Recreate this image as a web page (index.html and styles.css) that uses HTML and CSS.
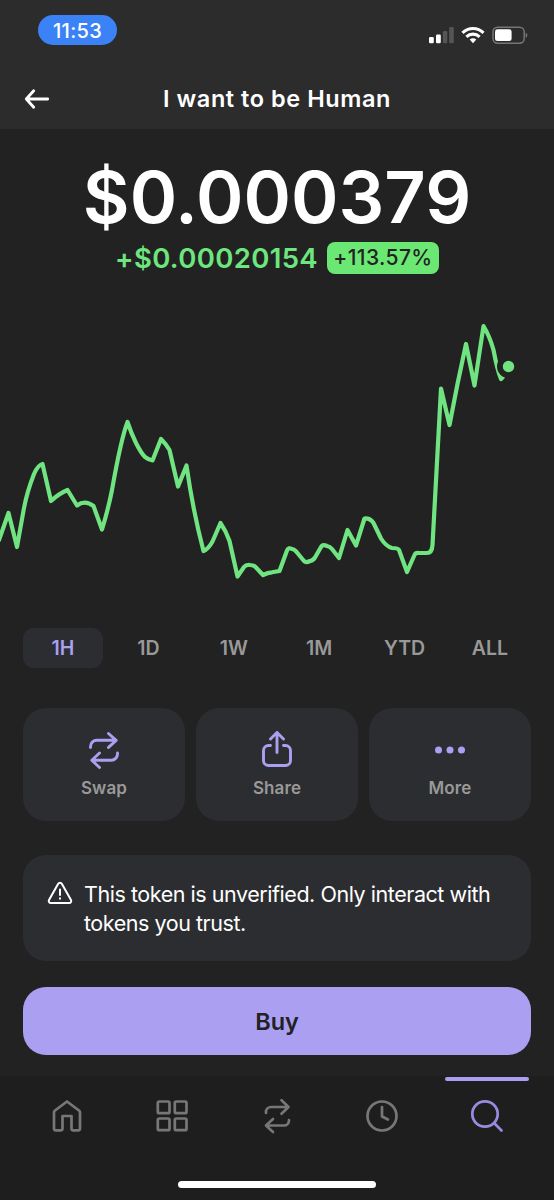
FILE: index.html
```html
<!DOCTYPE html>
<html lang="en">
<head>
<meta charset="UTF-8" />
<meta name="viewport" content="width=device-width, initial-scale=1" />
<title>I want to be Human</title>
<link rel="stylesheet" href="styles.css">
</head>
<body>
  <header class="top">
    <div class="status-bar">
      <span class="time">11:53</span>
      <svg class="status-icons" width="100" height="20" viewBox="0 0 100 20" aria-hidden="true">
        <g fill="#fff">
          <rect x="1" y="12" width="4.8" height="6.3" rx="1.3" />
          <rect x="8" y="9.5" width="4.8" height="8.8" rx="1.3" />
          <rect x="14.9" y="6" width="4.4" height="12.3" rx="1.3" fill="#555" />
          <rect x="21.2" y="2" width="4.6" height="16.3" rx="1.3" fill="#555" />
        </g>
        <g fill="none" stroke="#fff" stroke-width="3.1">
          <path d="M34.5 7.8a15 15 0 0 1 21 0" />
          <path d="M38.4 11.8a9.5 9.5 0 0 1 13.2 0" />
        </g>
        <path d="M41.7 14.6a5 5 0 0 1 6.6 0L45 18.2z" fill="#fff" />
        <rect x="65" y="2.2" width="31.2" height="16" rx="4.6" fill="none" stroke="#757575" stroke-width="1.5" />
        <rect x="67" y="4.3" width="16.6" height="11.8" rx="2.4" fill="#fff" />
        <path d="M97.7 7.7c2.2.8 2.2 4.2 0 5z" fill="#757575" />
      </svg>
    </div>
    <div class="title-bar">
      <svg class="back" width="28" height="24" viewBox="0 0 28 24" aria-label="Back">
        <path d="M11.700 3.700 4.300 12l7.400 8.300M4.300 12h21.400" />
      </svg>
      <h1>I want to be Human</h1>
    </div>
  </header>

  <main>
    <section class="price-block">
      <div class="price">$0.000379</div>
      <div class="change">
        <span class="change-value">+$0.00020154</span>
        <span class="badge">+113.57%</span>
      </div>
    </section>

    <!-- Price chart -->
    <svg class="chart" width="554" height="300" viewBox="0 300 554 300" aria-label="Price chart">
      <path class="line" d="M-1 540 L8.500 513 L17 547 L24 508 Q27 492 34 474 Q38 465 42.500 464 L51 501 Q59 493.500 67.500 490 L77 505.500 Q85 499.500 93.500 506 L102 529.500 Q108 510 112 490 Q121 439 127.500 422 Q131.500 434 136 443 Q141 453 145 457 Q149 460 152.500 460.500 L161 439 Q166 444 169.500 450 L178 486.500 L186.500 465.500 Q193 511 203.500 551 Q208 549.500 212.500 541.500 L220.500 523 Q226 531 229.500 541 L237.500 576.500 L244 567 Q246 564.500 250 565 Q254 565 256 567.500 L263 575 Q268 572.500 272 572.300 L279.500 571 L287 550.500 Q288.500 547 292 549 Q295 549.500 297 552.500 L304 561 Q306 563 310 561 Q313 560.500 315 557.500 L321 547 Q322.500 544 327 546 Q330 546.500 332 549 L339 558 L347.500 530 L356 545.500 L364.500 518.500 Q370 518 373.500 523 L381 538.500 Q386 546.500 392 548 Q398 548 399 550 L407 572 L414.500 555 Q415.500 552.500 419 553 H427 Q432 553 432.500 545 L441 388.500 L449.500 425 L457.500 384 L466 344 L474.500 385.500 L483.500 326 Q490 337 493.500 350 Q497 369 501 379 L509 370" />
      <circle class="halo" cx="508.500" cy="366.500" r="11.500" />
      <circle class="dot" cx="508.500" cy="366.500" r="5.700" />
    </svg>

    <nav class="ranges" aria-label="Chart range">
      <button class="range active">1H</button>
      <button class="range">1D</button>
      <button class="range">1W</button>
      <button class="range">1M</button>
      <button class="range">YTD</button>
      <button class="range">ALL</button>
    </nav>

    <section class="actions" aria-label="Actions">
      <button class="action">
        <svg width="40" height="40" viewBox="0 0 40 40">
          <path d="M6.500 17.500V16.500a6.200 6.200 0 0 1 6.200-6.200H32M24.500 3.500l7.700 6.900-7.700 7M33.500 23v1a6.200 6.200 0 0 1-6.200 6.200H8M15.500 23 7.800 30.200l7.700 7.300" />
        </svg>
        <span>Swap</span>
      </button>
      <button class="action">
        <svg width="40" height="40" viewBox="0 0 40 40">
          <path d="M20 22.500V2.500M13.500 9 20 2.500 26.500 9M13.500 15.500h-2a5 5 0 0 0-5 5v10a5 5 0 0 0 5 5h17a5 5 0 0 0 5-5v-10a5 5 0 0 0-5-5h-2" />
        </svg>
        <span>Share</span>
      </button>
      <button class="action">
        <svg width="40" height="40" viewBox="0 0 40 40">
          <g class="dots">
            <circle cx="8.500" cy="20" r="3.500" />
            <circle cx="20" cy="20" r="3.500" />
            <circle cx="31.500" cy="20" r="3.500" />
          </g>
        </svg>
        <span>More</span>
      </button>
    </section>

    <section class="notice">
      <svg width="28" height="26" viewBox="0 0 28 26" aria-hidden="true">
        <path d="M12.200 3.800a2.100 2.100 0 0 1 3.600 0l9.200 16.200a2.100 2.100 0 0 1-1.800 3.100H4.800A2.100 2.100 0 0 1 3 20zM14 9.500v5.500M14 18.300v.4" />
      </svg>
      <p>This token is unverified. Only interact with tokens you trust.</p>
    </section>

    <button class="buy">Buy</button>
  </main>

  <footer class="bottom">
    <nav class="tab-bar" aria-label="Main">
      <a class="tab" aria-label="Home">
        <svg width="40" height="40" viewBox="0 0 40 40">
          <path d="M20 5.500 32 14.500Q33 15.300 33 16.500V32.500Q33 34.300 31.200 34.300H26.200Q24.500 34.300 24.500 32.500V20H15.500V32.500Q15.500 34.300 13.700 34.300H8.800Q7 34.300 7 32.500V16.500Q7 15.300 8 14.500Z" />
        </svg>
      </a>
      <a class="tab" aria-label="Collectibles">
        <svg width="40" height="40" viewBox="0 0 40 40">
          <rect x="5.800" y="5.500" width="11.700" height="11.700" rx="1.500" />
          <rect x="22.800" y="5.500" width="11.700" height="11.700" rx="1.500" />
          <rect x="5.800" y="22.500" width="11.700" height="11.700" rx="1.500" />
          <rect x="22.800" y="22.500" width="11.700" height="11.700" rx="1.500" />
        </svg>
      </a>
      <a class="tab" aria-label="Swap">
        <svg width="40" height="40" viewBox="0 0 40 40">
          <path d="M9 17v-1a5 5 0 0 1 5-5H31M24.500 4.300l7 6.700-7 6.700M32 24v.500a5 5 0 0 1-5 5H9M16 23l-7 6.500 7 6.500" />
        </svg>
      </a>
      <a class="tab" aria-label="Activity">
        <svg width="40" height="40" viewBox="0 0 40 40">
          <circle cx="20" cy="20" r="14.500" />
          <path d="M20 11v9.500l6 3" />
        </svg>
      </a>
      <a class="tab active" aria-label="Search">
        <svg width="40" height="40" viewBox="0 0 40 40">
          <circle cx="18" cy="18" r="12.700" />
          <path d="M27.300 27.300 34.500 34.500" />
        </svg>
      </a>
    </nav>
    <div class="home-indicator"></div>
  </footer>
</body>
</html>
```
FILE: styles.css
```css
/* Reset and base styles */
* {
  margin: 0;
  padding: 0;
  box-sizing: border-box;
}
body {
  width: 554px;
  height: 1200px;
  display: flex;
  flex-direction: column;
  overflow: hidden;
  background: #222;
  color: #fff;
  font-family: Inter, "Liberation Sans", sans-serif;
}
button {
  border: none;
  background: none;
  font-family: inherit;
  cursor: pointer;
}
svg {
  display: block;
  flex-shrink: 0;
}

/* Header */
.top {
  height: 129px;
  background: #2c2c2c;
}
.status-bar {
  height: 68px;
  display: flex;
  justify-content: space-between;
  align-items: flex-start;
  padding: 15px 26px 0 38px;
}
.time {
  width: 79px;
  height: 30px;
  border-radius: 15px;
  background: #3c82f7;
  font-size: 20px;
  font-weight: 500;
  line-height: 32px;
  letter-spacing: 0.3px;
  text-align: center;
}
.status-icons {
  margin-top: 10px;
}
.title-bar {
  height: 61px;
  display: grid;
  grid-template-columns: 28px 1fr 28px;
  align-items: center;
  padding: 0 22px;
}
.back {
  fill: none;
  stroke: #fff;
  stroke-width: 2.8;
  stroke-linecap: round;
  stroke-linejoin: round;
}
h1 {
  font-size: 23.5px;
  font-weight: 600;
  letter-spacing: 0.55px;
  text-align: center;
}

/* Price */
main {
  flex: 1;
}
.price-block {
  height: 171px;
  padding-top: 30px;
}
.price {
  font-size: 72px;
  font-weight: 600;
  line-height: 76px;
  text-align: center;
}
.change {
  display: flex;
  justify-content: center;
  align-items: center;
  gap: 9px;
  margin-top: 7px;
}
.change-value {
  color: #6ee67f;
  font-size: 27.5px;
  font-weight: 600;
  line-height: 32px;
  letter-spacing: 0.35px;
}
.badge {
  width: 112px;
  height: 32px;
  border-radius: 8px;
  background: #6be873;
  color: #222;
  font-size: 21px;
  font-weight: 500;
  line-height: 32px;
  letter-spacing: 0.4px;
  text-align: center;
}

/* Chart */
.line {
  fill: none;
  stroke: #70e480;
  stroke-width: 4.2;
  stroke-linecap: round;
  stroke-linejoin: round;
}
.halo {
  fill: #222;
}
.dot {
  fill: #70e480;
}
.ranges {
  display: grid;
  grid-template-columns: repeat(6, 80px);
  justify-content: space-between;
  padding: 0 24px 0 23px;
  margin-top: 28px;
}
.range {
  height: 40px;
  border-radius: 11px;
  color: #999;
  font-size: 19.5px;
  font-weight: 600;
}
.range.active {
  background: #2c2d30;
  color: #ab9ff2;
}

/* Action cards */
.actions {
  display: grid;
  grid-template-columns: repeat(3, 1fr);
  gap: 11px;
  padding: 0 23px;
  margin-top: 40px;
}
.action {
  height: 113px;
  display: flex;
  flex-direction: column;
  align-items: center;
  gap: 7px;
  padding-top: 22px;
  border-radius: 23px;
  background: #2c2d30;
  color: #999;
  font-size: 17px;
  font-weight: 600;
  line-height: 22px;
  letter-spacing: 0.1px;
}
.action svg {
  fill: none;
  stroke: #ab9ff2;
  stroke-width: 2.9;
  stroke-linecap: round;
  stroke-linejoin: round;
}
.action .dots {
  fill: #ab9ff2;
  stroke: none;
}

/* Unverified token notice */
.notice {
  height: 106px;
  display: flex;
  gap: 10px;
  margin: 34px 23px 0;
  padding: 24px 20px 0 23px;
  border-radius: 23px;
  background: #2c2d30;
}
.notice svg {
  margin-top: 1px;
  fill: none;
  stroke: #fff;
  stroke-width: 2;
  stroke-linecap: round;
  stroke-linejoin: round;
}
.notice p {
  padding-top: 1px;
  font-size: 21.5px;
  line-height: 28.500px;
  letter-spacing: -0.45px;
}
.buy {
  display: block;
  width: 508px;
  height: 68px;
  margin: 26px auto 0;
  border-radius: 23px;
  background: #ab9ff2;
  color: #222;
  font-size: 23.5px;
  font-weight: 600;
}

/* Bottom navigation */
.bottom {
  height: 124px;
  background: #1e1e1e;
}
.tab-bar {
  height: 105px;
  display: grid;
  grid-template-columns: repeat(5, 105px);
  justify-content: center;
}
.tab {
  height: 80px;
  display: flex;
  justify-content: center;
  align-items: center;
  position: relative;
}
.tab svg {
  fill: none;
  stroke: #777;
  stroke-width: 2.7;
  stroke-linecap: round;
  stroke-linejoin: round;
}
.tab.active svg {
  stroke: #9b8be0;
}
.tab.active::before {
  content: "";
  position: absolute;
  top: 1px;
  left: 10px;
  width: 84px;
  height: 4px;
  border-radius: 2px;
  background: #ab9ff2;
}
.home-indicator {
  width: 198px;
  height: 7px;
  margin: 0 auto;
  border-radius: 4px;
  background: #fff;
}
```
